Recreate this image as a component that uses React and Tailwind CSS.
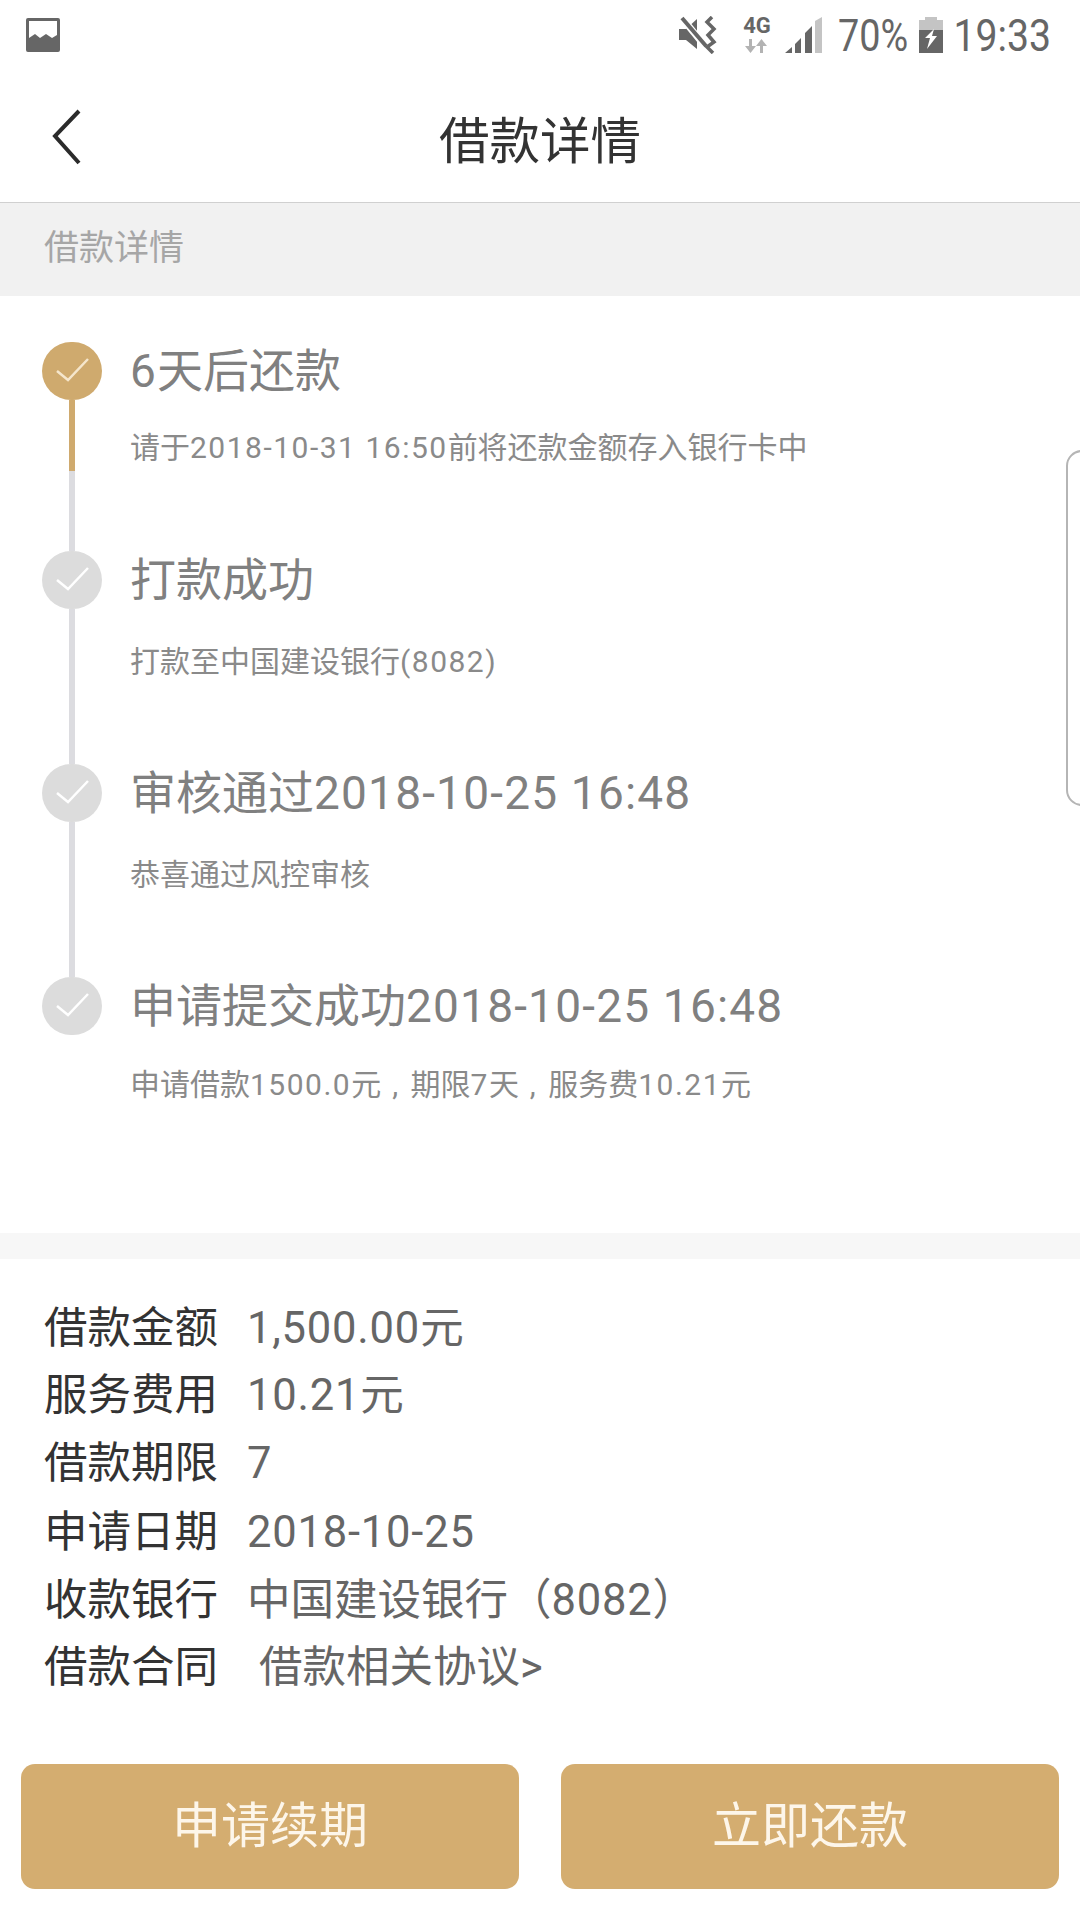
import React from "react";

const font = { fontFamily: '"Roboto","Noto Sans CJK SC",sans-serif' };

function Check({ color }) {
  return (
    <svg width="60" height="58" viewBox="0 0 60 58" fill="none">
      <path d="M15 29 L26 38 L46 17" stroke={color} strokeWidth="2.5" />
    </svg>
  );
}

function Mixed({ text, track }) {
  return text.split(/([\x20-\x7e]+)/).map((part, i) =>
    i % 2 === 1 ? (
      <span key={i} className={track}>{part}</span>
    ) : (
      part
    )
  );
}

const steps = [
  { title: "6天后还款", sub: "请于2018-10-31 16:50前将还款金额存入银行卡中", active: true, gap: "mt-[30px]", h: "h-[209px]", line: "h-[151px]" },
  { title: "打款成功", sub: "打款至中国建设银行(8082)", gap: "mt-[35px]", h: "h-[213px]", line: "h-[155px]" },
  { title: "审核通过2018-10-25 16:48", sub: "恭喜通过风控审核", gap: "mt-[35px]", h: "h-[213px]", line: "h-[155px]" },
  { title: "申请提交成功2018-10-25 16:48", sub: "申请借款1500.0元 , 期限7天 , 服务费10.21元", gap: "mt-[32px] [word-spacing:2px]", h: "h-[180px]", last: true },
];

const rows = [
  ["借款金额", "1,500.00元", "ml-[29px]", "h-[67px]"],
  ["服务费用", "10.21元", "ml-[29px]", "h-[67px]"],
  ["借款期限", "7", "ml-[29px]", "h-[70px]"],
  ["申请日期", "2018-10-25", "ml-[29px]", "h-[68px]"],
  ["收款银行", "中国建设银行（8082）", "ml-[29px]", "h-[68px]"],
  ["借款合同", "借款相关协议>", "ml-[41px]", "h-[66px]"],
];

function StatusBar() {
  return (
    <div className="h-[70px] flex items-center justify-between pl-[26px] pr-[29px] text-[#666666]">
      <svg width="34" height="34" viewBox="0 0 34 34">
        <path fillRule="evenodd" fill="#666666" d="M2 0H32a2 2 0 0 1 2 2V32a2 2 0 0 1-2 2H2a2 2 0 0 1-2-2V2a2 2 0 0 1 2-2ZM3 3V20L9 16L14 20L20 16L26 20L31 17V3Z" />
      </svg>
      <div className="flex items-center">
        <svg width="40" height="38" viewBox="0 0 40 38" className="mr-[23px]">
          <path fill="#666666" d="M0 13H7L18 3V33L7 24H0Z" />
          <path stroke="#ffffff" strokeWidth="7" d="M3 2L26 30" />
          <path stroke="#666666" strokeWidth="4" d="M3 2L27 30" />
          <path stroke="#666666" strokeWidth="3.5" fill="none" d="M33 1L28 6L35 13L29 19L35 26L28 31L34 37" />
        </svg>
        <div className="w-[30px] mr-[13px] flex flex-col items-center">
          <span className="text-[22px] leading-[18px] font-bold">4G</span>
          <svg width="24" height="14" viewBox="0 0 24 14" className="mt-[4px]">
            <path fill="#b3b3b3" d="M4 0H7V7H11L5.5 14L0 7H4ZM18 14H15V7H11L16.5 0L22 7H18Z" />
          </svg>
        </div>
        <svg width="38" height="36" viewBox="0 0 38 36" className="mr-[15px]">
          <path fill="#c4c4c4" d="M30 4L37 0V36H30Z" />
          <path fill="#666666" d="M0 36L7 30V36ZM10 27L16 21V36H10ZM20 16L27 9V36H20Z" />
        </svg>
        <span className="text-[45px] leading-none scale-x-[0.84] origin-left w-[72px] mr-[9px] whitespace-nowrap">70%</span>
        <svg width="24" height="36" viewBox="0 0 24 36" className="mr-[12px]">
          <path fill="#c4c4c4" d="M6 0H18V3H24V13H0V3H6Z" />
          <path fill="#666666" fillRule="evenodd" d="M0 13H24V36H0Z" />
          <path fill="#ffffff" d="M15 12L6 21H11L8 32L18 19H13Z" />
        </svg>
        <span className="w-[96px] flex justify-end">
          <span className="text-[45px] leading-none scale-x-[0.87] origin-right whitespace-nowrap">19:33</span>
        </span>
      </div>
    </div>
  );
}

export default function App() {
  return (
    <div className="relative w-[1080px] h-[1920px] bg-white overflow-hidden" style={font}>
      <StatusBar />
      <div className="relative h-[133px] flex items-center justify-center border-b border-[#d0d0d0]">
        <svg width="30" height="56" viewBox="0 0 30 56" fill="none" className="absolute left-[52px] top-[39px]">
          <path d="M27 2L3 27L27 54" stroke="#2b2b2b" strokeWidth="4" />
        </svg>
        <span className="text-[50.5px] leading-none text-[#333333] mt-[13px]">借款详情</span>
      </div>
      <div className="h-[93px] bg-[#f1f1f1] flex items-center pl-[44px]">
        <span className="text-[35px] leading-none text-[#a6a6a6] mb-[3px]">借款详情</span>
      </div>

      <div className="h-[937px] pt-[46px]">
        {steps.map((s) => (
          <div key={s.title} className={`flex pl-[42px] ${s.h}`}>
            <div className="w-[60px] flex flex-col items-center shrink-0">
              <div className={`w-[60px] h-[58px] rounded-full shrink-0 ${s.active ? "bg-[#cfaa6e]" : "bg-[#dcdcdc]"}`}>
                <Check color={s.active ? "#f5e6cc" : "#ffffff"} />
              </div>
              {!s.last && (
                <div className={`w-[6px] ${s.line} bg-[#dcdce0] flex flex-col`}>
                  {s.active && <div className="h-[71px] bg-[#cfaa6e]" />}
                </div>
              )}
            </div>
            <div className="ml-[28px]">
              <div className="h-[58px] flex items-center text-[46px] leading-none text-[#808080] whitespace-pre">
                <span><Mixed text={s.title} track="tracking-[1.2px]" /></span>
              </div>
              <div className={`${s.gap} text-[30px] leading-[36px] text-[#8a8a8a] whitespace-pre`}>
                <Mixed text={s.sub} track="tracking-[1.5px]" />
              </div>
            </div>
          </div>
        ))}
      </div>

      <div className="h-[26px] bg-[#f7f7f7]" />

      <div className="pt-[36px] pl-[44px] h-[505px]">
        {rows.map(([k, v, m, h]) => (
          <div key={k} className={`${h} flex items-center text-[43.5px] leading-none whitespace-nowrap`}>
            <span className="text-[#333333]">{k}</span>
            <span className={`${m} text-[#666666]`}>
              <Mixed text={v} track="tracking-[0.8px]" />
            </span>
          </div>
        ))}
      </div>

      <div className="flex justify-between px-[21px]">
        <div className="w-[498px] h-[125px] rounded-[14px] bg-[#d4ad70] flex items-center justify-center text-[49px] leading-none text-[#fdf6ea]">申请续期</div>
        <div className="w-[498px] h-[125px] rounded-[14px] bg-[#d4ad70] flex items-center justify-center text-[49px] leading-none text-[#fdf6ea]">立即还款</div>
      </div>

      <div className="absolute left-[1066px] top-[450px] w-[30px] h-[356px] rounded-l-[16px] border-2 border-[#b5b5b5]" />
    </div>
  );
}
